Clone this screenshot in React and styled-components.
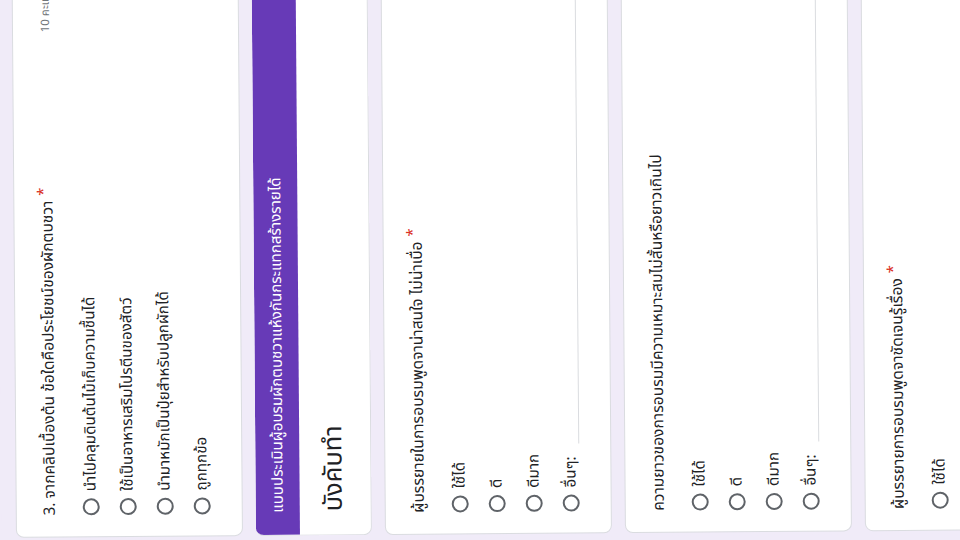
import React from "react";
import styled, { createGlobalStyle } from "styled-components";

const GlobalStyle = createGlobalStyle`
  html, body {
    margin: 0;
    padding: 0;
    width: 960px;
    height: 540px;
    overflow: hidden;
    background: #f0ebf8;
  }
  #root {
    width: 960px;
    height: 540px;
  }
  * { box-sizing: border-box; }
`;

const Viewport = styled.div`
  width: 960px;
  height: 540px;
  overflow: hidden;
  background: #f0ebf8;
  font-family: "Noto Sans Thai", "Noto Sans Thai UI", "Noto Sans", Roboto, sans-serif;
  color: #202124;
`;

/* the phone screen was photographed lying on its side: the portrait page is turned */
const Page = styled.div`
  width: 584px;
  height: 1000px;
  transform-origin: 0 0;
  transform: translate(2px, 541px) rotate(-90.45deg);
  display: flex;
  flex-direction: column;
  gap: 13px;
  padding: 14px 3px 0 3px;
  background: #f0ebf8;
`;

const Card = styled.div`
  flex: none;
  background: #ffffff;
  border: 1px solid #dadce0;
  border-radius: 8px;
  padding: 21px 24px 21px 21px;
`;

const TitleRow = styled.div`
  display: flex;
  align-items: center;
  justify-content: space-between;
  gap: 12px;
  height: 24px;
  line-height: 24px;
  font-size: 15.6px;
  color: #202124;
`;

const Title = styled.div`
  white-space: nowrap;
  height: 24px;
`;

const Required = styled.span`
  color: #d93025;
  margin-left: 5px;
  font-size: 15px;
  line-height: 0;
  vertical-align: 4px;
`;

const Points = styled.span`
  font-size: 11.5px;
  color: #70757a;
  white-space: nowrap;
`;

const OptionList = styled.div`
  margin-top: 11px;
  display: flex;
  flex-direction: column;
`;

const Option = styled.div`
  height: 37px;
  display: flex;
  align-items: center;
  gap: 7px;
`;

const Radio = styled.span`
  flex: none;
  width: 17px;
  height: 17px;
  border-radius: 50%;
  border: 2px solid #5f6368;
`;

const OptionLabel = styled.span`
  font-size: 15.2px;
  line-height: 20px;
  color: #202124;
  white-space: nowrap;
`;

const OtherInput = styled.span`
  flex: 1;
  height: 16px;
  margin-left: 6px;
  border-bottom: 1px solid #dadce0;
`;

const SectionCard = styled.div`
  flex: none;
  background: #ffffff;
  border: 1px solid #dadce0;
  border-top: none;
  border-radius: 8px;
  overflow: hidden;
`;

const SectionBand = styled.div`
  height: 44px;
  background: #673ab7;
  color: #ffffff;
  font-size: 15.2px;
  display: flex;
  align-items: center;
  padding-left: 22px;
  white-space: nowrap;
`;

const SectionTitle = styled.div`
  font-size: 25.5px;
  line-height: 30px;
  height: 71px;
  padding: 19px 24px 22px 23px;
  color: #202124;
`;

const Question = ({ title, required, points, options, other }) => (
  <Card>
    <TitleRow>
      <Title>
        {title}
        {required && <Required>*</Required>}
      </Title>
      {points && <Points>{points}</Points>}
    </TitleRow>
    <OptionList>
      {options.map((o) => (
        <Option key={o}>
          <Radio />
          <OptionLabel>{o}</OptionLabel>
        </Option>
      ))}
      {other && (
        <Option>
          <Radio />
          <OptionLabel>อื่นๆ:</OptionLabel>
          <OtherInput />
        </Option>
      )}
    </OptionList>
  </Card>
);

const rating = ["ใช้ได้", "ดี", "ดีมาก"];

export default function App() {
  return (
    <>
      <GlobalStyle />
      <Viewport>
        <Page>
          <Question
            title="3. จากคลิปเบื้องต้น ข้อใดคือประโยชน์ของผักตบชวา"
            required
            points="10 คะแนน"
            options={[
              "นำไปคลุมดินต้นไม้เก็บความชื้นได้",
              "ใช้เป็นอาหารเสริมโปรตีนของสัตว์",
              "นำมาหมักเป็นปุ๋ยสำหรับปลูกผักได้",
              "ถูกทุกข้อ",
            ]}
          />
          <SectionCard>
            <SectionBand>แบบประเมินผู้อบรมผักตบชวาแห้งกันกระแทกสร้างรายได้</SectionBand>
            <SectionTitle>บังคับทำ</SectionTitle>
          </SectionCard>
          <Question
            title="ผู้บรรยายในการอบรมพูดจาน่าสนใจ ไม่น่าเบื่อ"
            required
            options={rating}
            other
          />
          <Question
            title="ความยาวของการอบรมมีความเหมาะสมไม่สั้นหรือยาวเกินไป"
            options={rating}
            other
          />
          <Question
            title="ผู้บรรยายการอบรมพูดจาชัดเจนรู้เรื่อง"
            required
            options={rating}
            other
          />
        </Page>
      </Viewport>
    </>
  );
}
